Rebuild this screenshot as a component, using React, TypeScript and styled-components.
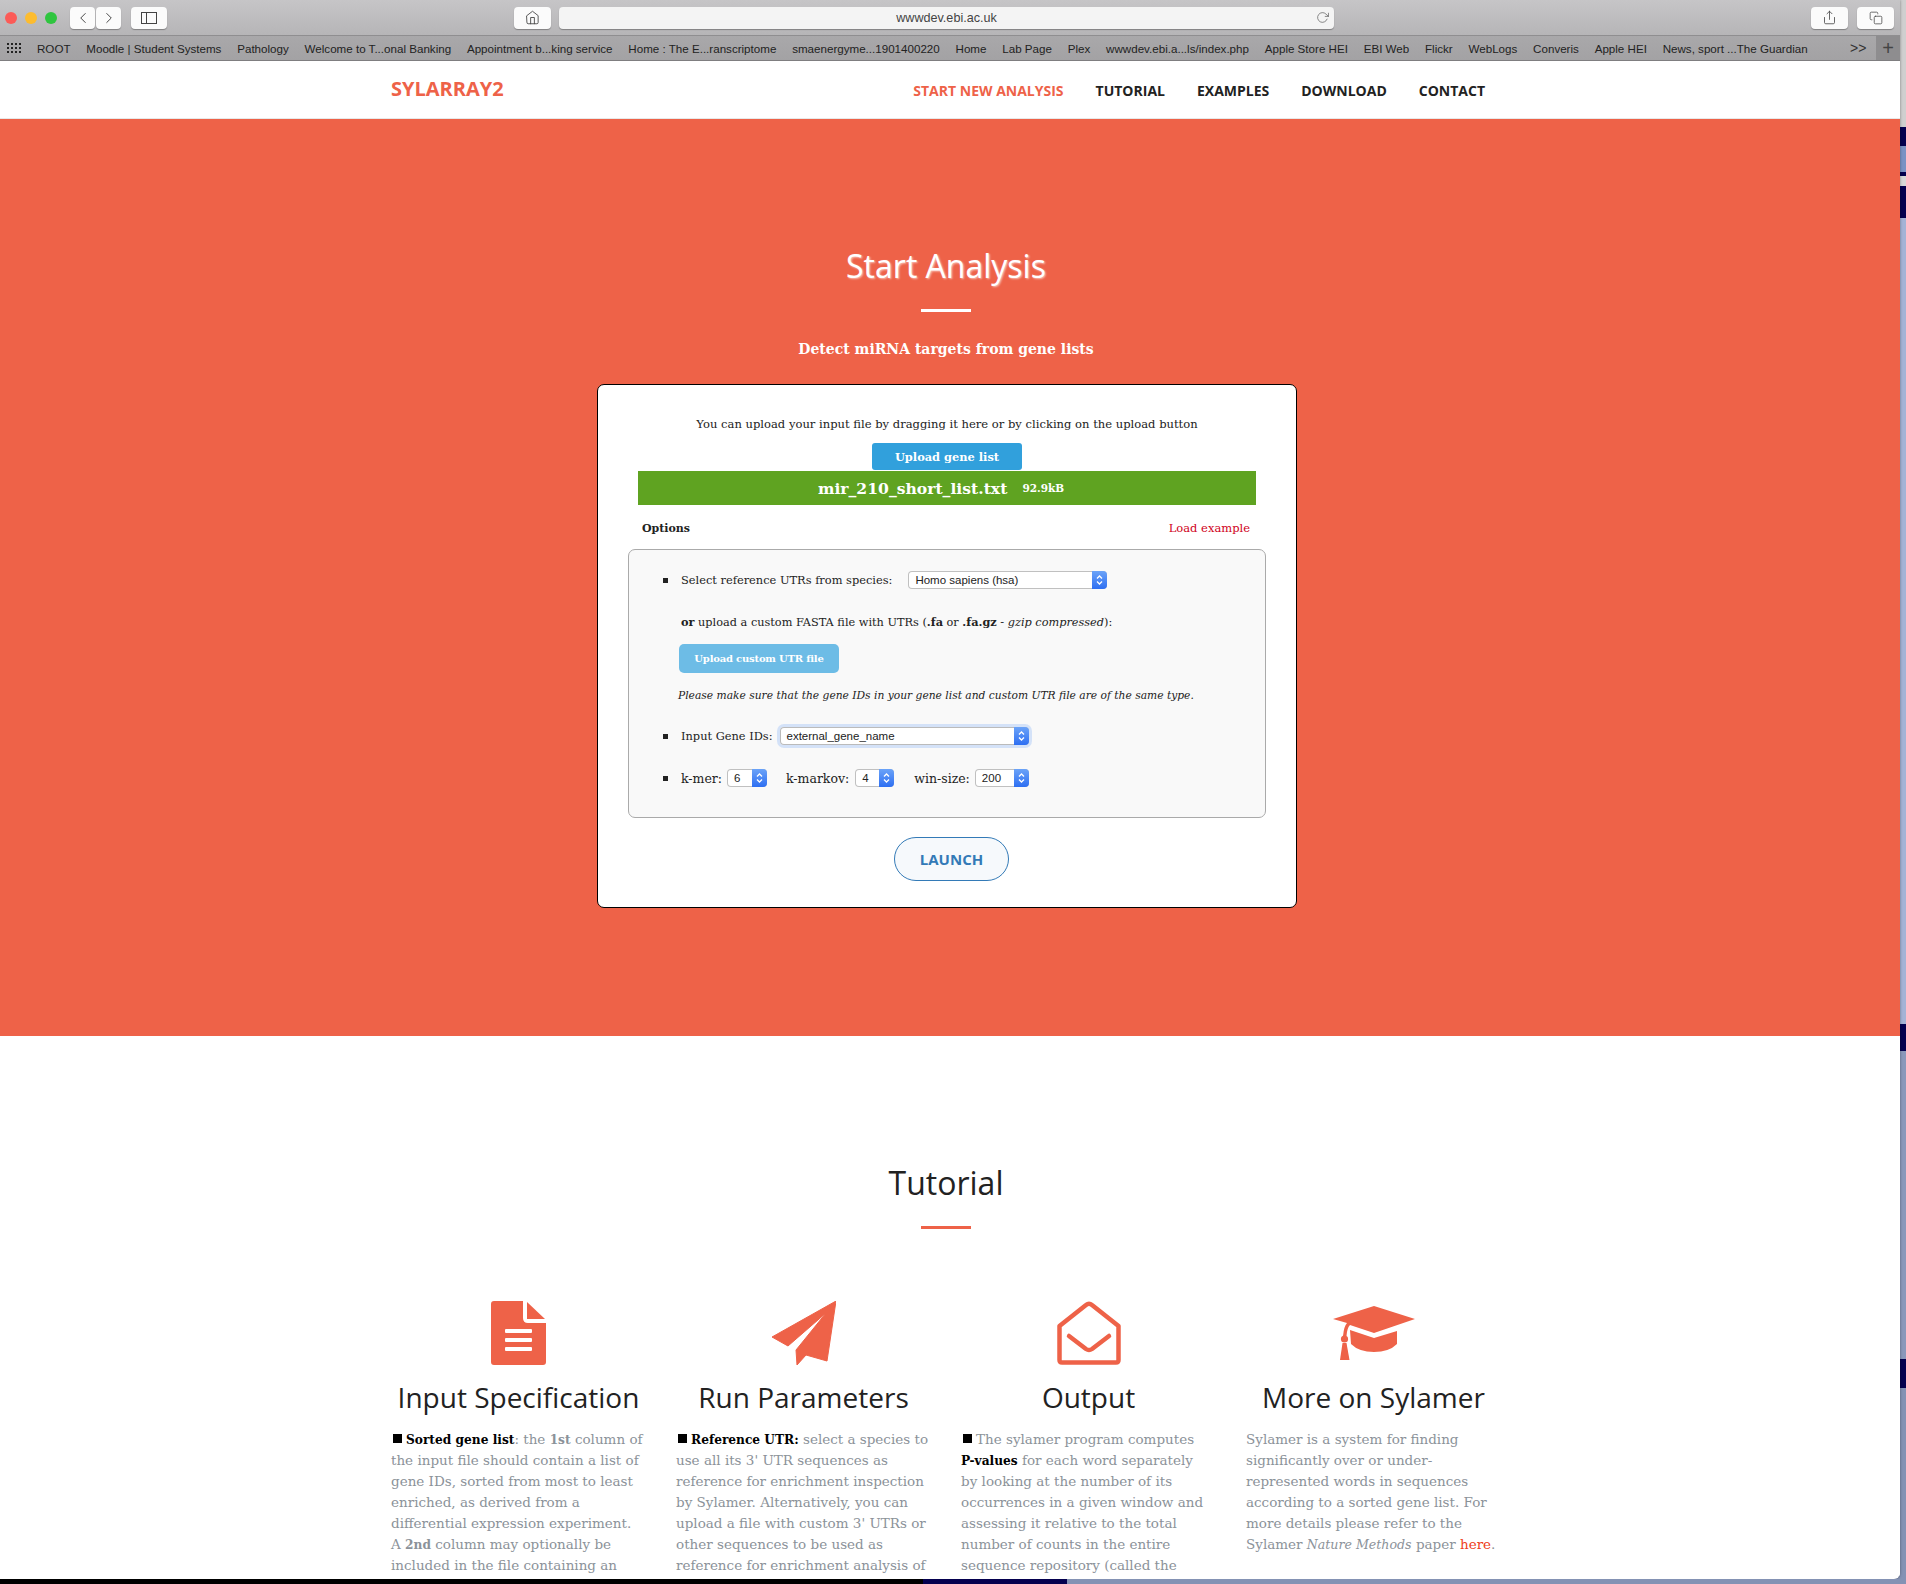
import styled, { createGlobalStyle } from 'styled-components'
import { FiChevronLeft, FiChevronRight, FiHome, FiRotateCw, FiShare, FiCopy } from 'react-icons/fi'

const GlobalStyle = createGlobalStyle`
    html, body {
        margin: 0;
        padding: 0;
        background: #8492b4;
    }
    * {
        box-sizing: border-box;
    }
`

const serif = `"DejaVu Serif", "Liberation Serif", serif`
const sans = `"Open Sans", "Liberation Sans", sans-serif`
const orange = '#ee6248'

const Desktop = styled.div`
    display: flex;
    flex-direction: column;
    width: 1906px;
    height: 1584px;
    overflow: hidden;
    background: linear-gradient(
        to bottom,
        #cfcfcf 0,
        #cfcfcf 127px,
        #04004f 127px,
        #04004f 146px,
        #7a92c4 146px,
        #7a92c4 172px,
        #04004f 172px,
        #04004f 176px,
        #d8d8d8 176px,
        #d8d8d8 186px,
        #04004f 186px,
        #04004f 218px,
        #a4b3d6 218px,
        #a4b3d6 1024px,
        #04004f 1024px,
        #04004f 1051px,
        #8a98bb 1051px,
        #8a98bb 1359px,
        #04004f 1359px,
        #04004f 1388px,
        #8492b4 1388px
    );
`

const Browser = styled.div`
    width: 1900px;
    height: 1579px;
    overflow: hidden;
    background: #fff;
    border-bottom-right-radius: 6px;
    box-shadow: 0 0 3px rgba(0, 0, 0, 0.4);
`

const BottomEdge = styled.div`
    height: 5px;
    background: linear-gradient(
        to right,
        #000 0,
        #000 923px,
        #04004f 923px,
        #04004f 1067px,
        #8492b4 1067px
    );
`

const TitleBar = styled.div`
    display: flex;
    align-items: center;
    height: 36px;
    padding: 0 6px 0 5px;
    background: linear-gradient(to bottom, #c6c5c7, #b6b5b7);
    border-bottom: 1px solid #8f8e90;
`

const Lights = styled.div`
    display: flex;
    gap: 8px;
    margin-right: 13px;
`

const Light = styled.span<{ $color: string }>`
    width: 12px;
    height: 12px;
    border-radius: 50%;
    background: ${(p) => p.$color};
`

const ChromeButton = styled.div<{ $width: number; $left?: number }>`
    display: flex;
    align-items: center;
    justify-content: center;
    width: ${(p) => p.$width}px;
    height: 22px;
    margin-left: ${(p) => p.$left || 0}px;
    background: #fbfbfb;
    border-radius: 4px;
    box-shadow: 0 1px 1px rgba(0, 0, 0, 0.3);
    color: #444;
    font-size: 15px;
`

const AddressBar = styled.div`
    position: relative;
    display: flex;
    align-items: center;
    justify-content: center;
    width: 775px;
    height: 22px;
    margin-left: 8px;
    background: #f4f4f4;
    border-radius: 4px;
    box-shadow: 0 1px 1px rgba(0, 0, 0, 0.3);
    color: #444;
    font-family: "Liberation Sans", sans-serif;
    font-size: 12.6px;

    svg {
        position: absolute;
        right: 5px;
        top: 4px;
        color: #666;
    }
`

const RightButtons = styled.div`
    display: flex;
    gap: 9px;
    margin-left: auto;
`

const BookmarkBar = styled.div`
    display: flex;
    align-items: center;
    height: 25px;
    padding-left: 7px;
    background: linear-gradient(to bottom, #a9a8aa, #a3a2a4);
    border-bottom: 1px solid #7f7e80;
    font-family: "Liberation Sans", sans-serif;
    font-size: 11.6px;
    color: #222;
`

const AppsGrid = styled.div`
    display: grid;
    grid-template-columns: repeat(4, 2px);
    gap: 2px;
    margin-right: 16px;

    span {
        width: 2px;
        height: 2px;
        background: #222;
    }
`

const Bookmarks = styled.div`
    display: flex;
    gap: 15.8px;
    flex: 1;
    white-space: nowrap;
`

const MoreBookmarks = styled.div`
    width: 18px;
    margin-right: 8px;
    font-size: 14px;
    color: #333;
`

const NewTab = styled.div`
    display: flex;
    align-items: center;
    justify-content: center;
    width: 24px;
    height: 24px;
    background: #8e8d8f;
    color: #444;
    font-size: 20px;
    font-weight: 300;
`

const Page = styled.div`
    padding-right: 8px;
    background: #fff;
`

const Container = styled.div`
    width: 1110px;
    margin: 0 auto;
`

const NavBar = styled.nav`
    height: 58px;
    border-bottom: 1px solid #e8e8e8;
    margin-right: -8px;
    padding-right: 8px;
`

const NavInner = styled(Container)`
    display: flex;
    align-items: center;
    justify-content: space-between;
    height: 57px;
    padding: 1px 16px 0 0;
`

const Logo = styled.div`
    margin-top: -3px;
    font-family: ${sans};
    font-size: 20px;
    font-weight: 700;
    color: ${orange};
`

const NavLinks = styled.div`
    display: flex;
    gap: 32px;
`

const NavLink = styled.a<{ $active?: boolean }>`
    font-family: ${sans};
    font-size: 14px;
    font-weight: 700;
    color: ${(p) => (p.$active ? orange : '#222')};
`

const Hero = styled.section`
    height: 917px;
    margin-right: -8px;
    padding: 120px 8px 0 0;
    background: ${orange};
    text-align: center;
`

const HeroTitle = styled.h1`
    margin: 0;
    font-family: ${sans};
    font-size: 32px;
    font-weight: 400;
    line-height: 54px;
    color: #fff;
    text-shadow: 1px 1px 2px rgba(255, 255, 255, 0.6);
`

const Rule = styled.div<{ $color: string }>`
    width: 50px;
    height: 3px;
    margin: 0 auto;
    background: ${(p) => p.$color};
`

const HeroRule = styled(Rule)`
    margin-top: 16px;
`

const HeroSub = styled.h2`
    margin: 27px 0 25px;
    font-family: ${serif};
    font-size: 14px;
    font-weight: 700;
    line-height: 20px;
    color: #fff;
`

const Card = styled.div`
    width: 700px;
    height: 524px;
    margin: 0 0 0 597px;
    padding: 29px 30px 0 30px;
    background: #fff;
    border: 1px solid #000;
    border-radius: 7px;
    color: #222;
    font-family: ${serif};
    font-size: 12px;
    text-align: left;
`

const UploadHint = styled.p`
    margin: 0 0 9px;
    line-height: 20px;
    text-align: center;
    font-size: 11.55px;
`

const UploadButton = styled.button`
    display: block;
    width: 150px;
    height: 27px;
    margin: 0 auto 1px;
    padding: 0;
    background: #31a0dc;
    border: 0;
    border-radius: 3px;
    color: #fff;
    font-family: ${serif};
    font-size: 11.4px;
    font-weight: 700;
`

const FileBar = styled.div`
    display: flex;
    align-items: center;
    justify-content: center;
    gap: 15px;
    width: 618px;
    height: 34px;
    margin: 0 auto;
    padding-right: 12px;
    background: #5fa321;
    color: #fff;
`

const FileName = styled.span`
    font-size: 15.6px;
    font-weight: 700;
`

const FileSize = styled.span`
    font-size: 10.5px;
    font-weight: 700;
`

const OptionsHead = styled.div`
    display: flex;
    justify-content: space-between;
    align-items: center;
    height: 20px;
    margin: 13px 16px 11px 14px;
    font-size: 11.5px;
`

const OptionsLabel = styled.strong`
    font-size: 11px;
    font-weight: 700;
`

const LoadExample = styled.a`
    color: #d0021b;
`

const OptionsPanel = styled.div`
    width: 638px;
    height: 269px;
    padding: 21px 0 0 34px;
    background: #f9f9f9;
    border: 1px solid #aaa;
    border-radius: 7px;
    font-size: 11.4px;
`

const Row = styled.div<{ $top?: number; $big?: boolean }>`
    display: flex;
    align-items: center;
    height: 18px;
    margin-top: ${(p) => p.$top || 0}px;
    font-size: ${(p) => (p.$big ? '12.5px' : 'inherit')};
`

const Bullet = styled.span`
    width: 5px;
    height: 5px;
    margin-right: 13px;
    background: #222;
`

const Label = styled.span<{ $gap?: number; $left?: number }>`
    margin-left: ${(p) => p.$left || 0}px;
    margin-right: ${(p) => p.$gap || 5}px;
    white-space: nowrap;
`

const SelectBox = styled.div<{ $width: number; $focused?: boolean }>`
    display: flex;
    justify-content: space-between;
    align-items: center;
    width: ${(p) => p.$width}px;
    height: 18px;
    padding-left: 7px;
    background: #fff;
    border-radius: 4px;
    box-shadow: ${(p) =>
        p.$focused
            ? '0 0 0 3px #d4e2f8, inset 0 0 0 1px #bbb'
            : 'inset 0 0 0 1px #c0c0c0'};
    font-family: "Liberation Sans", sans-serif;
    font-size: 11.5px;
    color: #222;
`

const Stepper = styled.span`
    display: flex;
    align-items: center;
    justify-content: center;
    width: 15px;
    height: 18px;
    background: linear-gradient(to bottom, #6ba3f8, #2e6ff2);
    border-radius: 0 4px 4px 0;
`

const PlainLine = styled.p<{ $left: number; $top: number }>`
    margin: ${(p) => p.$top}px 0 0 ${(p) => p.$left}px;
    line-height: 20px;
    font-size: 11.3px;
    white-space: nowrap;
`

const ItalicLine = styled(PlainLine)`
    font-style: italic;
    font-size: 10.7px;
`

const CustomButton = styled.button`
    display: block;
    width: 160px;
    height: 29px;
    margin: 11px 0 0 16px;
    padding: 0;
    background: #6dbce6;
    border: 0;
    border-radius: 5px;
    color: #fff;
    font-family: ${serif};
    font-size: 10px;
    font-weight: 700;
    letter-spacing: -0.2px;
`

const LaunchRow = styled.div`
    display: flex;
    justify-content: center;
    padding: 19px 0 0 9px;
`

const LaunchButton = styled.button`
    width: 115px;
    height: 44px;
    padding: 0;
    background: #f6f9fc;
    border: 1px solid #337ab7;
    border-radius: 22px;
    color: #337ab7;
    font-family: ${sans};
    font-size: 15px;
    font-weight: 700;
`

const Tutorial = styled.section`
    padding-top: 120px;
    text-align: center;
`

const TutorialTitle = styled.h2`
    margin: 0;
    font-family: ${sans};
    font-size: 32px;
    font-weight: 400;
    line-height: 54px;
    color: #222;
`

const TutorialRule = styled(Rule)`
    margin-top: 16px;
`

const Columns = styled.div`
    display: grid;
    grid-template-columns: repeat(4, 285px);
    justify-content: center;
    margin-top: 72px;
`

const Column = styled.div`
    padding: 0 15px;
`

const IconSlot = styled.div`
    display: flex;
    align-items: center;
    justify-content: center;
    height: 64px;
    color: ${orange};
`

const ColumnTitle = styled.h3`
    margin: 12px 0 12px;
    font-family: ${sans};
    font-size: 28px;
    font-weight: 400;
    line-height: 40px;
    color: #222;
    white-space: nowrap;
`

const ColumnText = styled.p`
    margin: 0;
    font-family: ${serif};
    font-size: 13.5px;
    line-height: 21px;
    color: #8b9299;
    text-align: left;
    white-space: nowrap;

    b, strong, i {
        line-height: 1;
    }

    b {
        color: #000;
        font-size: 12.2px;
    }

    strong {
        font-size: 12.2px;
    }

    i {
        font-size: 12.6px;
    }

    a {
        color: #ee3f22;
    }
`

const BlackSquare = styled.span`
    display: inline-block;
    width: 9px;
    height: 9px;
    margin: 0 4px 1px 2px;
    background: #000;
`

const bookmarks = [
    'ROOT',
    'Moodle | Student Systems',
    'Pathology',
    'Welcome to T...onal Banking',
    'Appointment b...king service',
    'Home : The E...ranscriptome',
    'smaenergyme...1901400220',
    'Home',
    'Lab Page',
    'Plex',
    'wwwdev.ebi.a...ls/index.php',
    'Apple Store HEI',
    'EBI Web',
    'Flickr',
    'WebLogs',
    'Converis',
    'Apple HEI',
    'News, sport ...The Guardian',
]

const StepperArrows = () => (
    <Stepper>
        <svg width="7" height="12" viewBox="0 0 7 12" fill="none" stroke="#fff" strokeWidth="1.3">
            <path d="M1 4.5 L3.5 2 L6 4.5" />
            <path d="M1 7.5 L3.5 10 L6 7.5" />
        </svg>
    </Stepper>
)

const Select = ({ value, width, focused }: { value: string; width: number; focused?: boolean }) => (
    <SelectBox $width={width} $focused={focused}>
        {value}
        <StepperArrows />
    </SelectBox>
)

const SidebarIcon = () => (
    <svg width="16" height="12" viewBox="0 0 16 12" fill="none" stroke="#444">
        <rect x="0.5" y="0.5" width="15" height="11" />
        <path d="M5.5 0.5 V11.5" />
    </svg>
)

const FileIcon = () => (
    <svg width="55" height="64" viewBox="0 0 55 64" fill="currentColor">
        <path
            fillRule="evenodd"
            d="M3 0 H32 V17 Q32 22 37 22 H55 V61 Q55 64 52 64 H3 Q0 64 0 61 V3 Q0 0 3 0 Z M15 28 a1 1 0 0 0 -1 1 V31 a1 1 0 0 0 1 1 H40 a1 1 0 0 0 1 -1 V29 a1 1 0 0 0 -1 -1 Z M15 37 a1 1 0 0 0 -1 1 V40 a1 1 0 0 0 1 1 H40 a1 1 0 0 0 1 -1 V38 a1 1 0 0 0 -1 -1 Z M15 46 a1 1 0 0 0 -1 1 V49 a1 1 0 0 0 1 1 H40 a1 1 0 0 0 1 -1 V47 a1 1 0 0 0 -1 -1 Z"
        />
        <path d="M36 1 L54 18 H36 Z" />
    </svg>
)

const PlaneIcon = () => (
    <svg width="64" height="64" viewBox="0 0 64 64" fill="currentColor">
        <path d="M64 0 L55 60 L34 54 L25 64 L24 49 L54 12 L16 45 L0 36 Z" strokeLinejoin="round" stroke="currentColor" strokeWidth="1" />
    </svg>
)

const EnvelopeIcon = () => (
    <svg width="64" height="64" viewBox="0 0 64 64" fill="none" stroke="currentColor" strokeWidth="4.5" strokeLinejoin="round" strokeLinecap="round">
        <path d="M2.5 25 L29 4 Q32 1.5 35 4 L61.5 25 V59 Q61.5 61.5 59 61.5 H5 Q2.5 61.5 2.5 59 Z" />
        <path d="M12 35 L29 48 Q32 50 35 48 L52 35" />
    </svg>
)

const CapIcon = () => (
    <svg width="82" height="55" viewBox="0 0 82 55" fill="currentColor">
        <path d="M41 0 L82 13 L41 27 L17 19 Q14 22 13.5 30 L10 30 Q11 20 14 17 L0 13 Z" />
        <path d="M17 24 L41 32 L64 25 V38 Q56 46 41 46 Q26 46 18 38 Z" />
        <circle cx="11.5" cy="33" r="3.6" />
        <path d="M9.5 37 H13.5 L16.5 54 H7 Z" />
    </svg>
)

const App = () => {
    return (
        <Desktop>
            <GlobalStyle />
            <Browser>
                <TitleBar>
                    <Lights>
                        <Light $color="#fc5b57" />
                        <Light $color="#fdbc2e" />
                        <Light $color="#2fc53f" />
                    </Lights>
                    <ChromeButton $width={25}>
                        <FiChevronLeft size={18} strokeWidth={1.3} />
                    </ChromeButton>
                    <ChromeButton $width={25} $left={1}>
                        <FiChevronRight size={18} strokeWidth={1.3} />
                    </ChromeButton>
                    <ChromeButton $width={36} $left={10}>
                        <SidebarIcon />
                    </ChromeButton>
                    <ChromeButton $width={37} $left={347}>
                        <FiHome size={15} strokeWidth={1.4} />
                    </ChromeButton>
                    <AddressBar>
                        wwwdev.ebi.ac.uk
                        <FiRotateCw size={13} strokeWidth={1.4} />
                    </AddressBar>
                    <RightButtons>
                        <ChromeButton $width={37}>
                            <FiShare size={15} strokeWidth={1.3} />
                        </ChromeButton>
                        <ChromeButton $width={37}>
                            <FiCopy size={14} strokeWidth={1.3} />
                        </ChromeButton>
                    </RightButtons>
                </TitleBar>
                <BookmarkBar>
                    <AppsGrid>
                        {Array.from({ length: 12 }).map((_, i) => (
                            <span key={i} />
                        ))}
                    </AppsGrid>
                    <Bookmarks>
                        {bookmarks.map((b) => (
                            <span key={b}>{b}</span>
                        ))}
                    </Bookmarks>
                    <MoreBookmarks>&gt;&gt;</MoreBookmarks>
                    <NewTab>+</NewTab>
                </BookmarkBar>
                <Page>
                    <NavBar>
                        <NavInner>
                            <Logo>SYLARRAY2</Logo>
                            <NavLinks>
                                <NavLink $active>START NEW ANALYSIS</NavLink>
                                <NavLink>TUTORIAL</NavLink>
                                <NavLink>EXAMPLES</NavLink>
                                <NavLink>DOWNLOAD</NavLink>
                                <NavLink>CONTACT</NavLink>
                            </NavLinks>
                        </NavInner>
                    </NavBar>
                    <Hero>
                        <HeroTitle>Start Analysis</HeroTitle>
                        <HeroRule $color="#fff" />
                        <HeroSub>Detect miRNA targets from gene lists</HeroSub>
                        <Card>
                            <UploadHint>
                                You can upload your input file by dragging it here or by clicking on the upload button
                            </UploadHint>
                            <UploadButton>Upload gene list</UploadButton>
                            <FileBar>
                                <FileName>mir_210_short_list.txt</FileName>
                                <FileSize>92.9kB</FileSize>
                            </FileBar>
                            <OptionsHead>
                                <OptionsLabel>Options</OptionsLabel>
                                <LoadExample>Load example</LoadExample>
                            </OptionsHead>
                            <OptionsPanel>
                                <Row>
                                    <Bullet />
                                    <Label $gap={16}>Select reference UTRs from species:</Label>
                                    <Select value="Homo sapiens (hsa)" width={199} />
                                </Row>
                                <PlainLine $left={18} $top={23}>
                                    <b>or</b> upload a custom FASTA file with UTRs (<b>.fa</b> or <b>.fa.gz</b> - <i>gzip compressed</i>):
                                </PlainLine>
                                <CustomButton>Upload custom UTR file</CustomButton>
                                <ItalicLine $left={15} $top={13}>
                                    Please make sure that the gene IDs in your gene list and custom UTR file are of the same type.
                                </ItalicLine>
                                <Row $top={21}>
                                    <Bullet />
                                    <Label $gap={7}>Input Gene IDs:</Label>
                                    <Select value="external_gene_name" width={249} focused />
                                </Row>
                                <Row $top={24} $big>
                                    <Bullet />
                                    <Label>k-mer:</Label>
                                    <Select value="6" width={40} />
                                    <Label $left={19} $gap={6}>k-markov:</Label>
                                    <Select value="4" width={39} />
                                    <Label $left={20} $gap={5}>win-size:</Label>
                                    <Select value="200" width={54} />
                                </Row>
                            </OptionsPanel>
                            <LaunchRow>
                                <LaunchButton>LAUNCH</LaunchButton>
                            </LaunchRow>
                        </Card>
                    </Hero>
                    <Tutorial>
                        <TutorialTitle>Tutorial</TutorialTitle>
                        <TutorialRule $color={orange} />
                        <Columns>
                            <Column>
                                <IconSlot>
                                    <FileIcon />
                                </IconSlot>
                                <ColumnTitle>Input Specification</ColumnTitle>
                                <ColumnText>
                                    <BlackSquare />
                                    <b>Sorted gene list</b>: the <strong>1st</strong> column of
                                    <br />
                                    the input file should contain a list of
                                    <br />
                                    gene IDs, sorted from most to least
                                    <br />
                                    enriched, as derived from a
                                    <br />
                                    differential expression experiment.
                                    <br />
                                    A <strong>2nd</strong> column may optionally be
                                    <br />
                                    included in the file containing an
                                </ColumnText>
                            </Column>
                            <Column>
                                <IconSlot>
                                    <PlaneIcon />
                                </IconSlot>
                                <ColumnTitle>Run Parameters</ColumnTitle>
                                <ColumnText>
                                    <BlackSquare />
                                    <b>Reference UTR:</b> select a species to
                                    <br />
                                    use all its 3' UTR sequences as
                                    <br />
                                    reference for enrichment inspection
                                    <br />
                                    by Sylamer. Alternatively, you can
                                    <br />
                                    upload a file with custom 3' UTRs or
                                    <br />
                                    other sequences to be used as
                                    <br />
                                    reference for enrichment analysis of
                                </ColumnText>
                            </Column>
                            <Column>
                                <IconSlot>
                                    <EnvelopeIcon />
                                </IconSlot>
                                <ColumnTitle>Output</ColumnTitle>
                                <ColumnText>
                                    <BlackSquare />
                                    The sylamer program computes
                                    <br />
                                    <b>P-values</b> for each word separately
                                    <br />
                                    by looking at the number of its
                                    <br />
                                    occurrences in a given window and
                                    <br />
                                    assessing it relative to the total
                                    <br />
                                    number of counts in the entire
                                    <br />
                                    sequence repository (called the
                                </ColumnText>
                            </Column>
                            <Column>
                                <IconSlot>
                                    <CapIcon />
                                </IconSlot>
                                <ColumnTitle>More on Sylamer</ColumnTitle>
                                <ColumnText>
                                    Sylamer is a system for finding
                                    <br />
                                    significantly over or under-
                                    <br />
                                    represented words in sequences
                                    <br />
                                    according to a sorted gene list. For
                                    <br />
                                    more details please refer to the
                                    <br />
                                    Sylamer <i>Nature Methods</i> paper <a>here</a>.
                                </ColumnText>
                            </Column>
                        </Columns>
                    </Tutorial>
                </Page>
            </Browser>
            <BottomEdge />
        </Desktop>
    )
}

export default App
